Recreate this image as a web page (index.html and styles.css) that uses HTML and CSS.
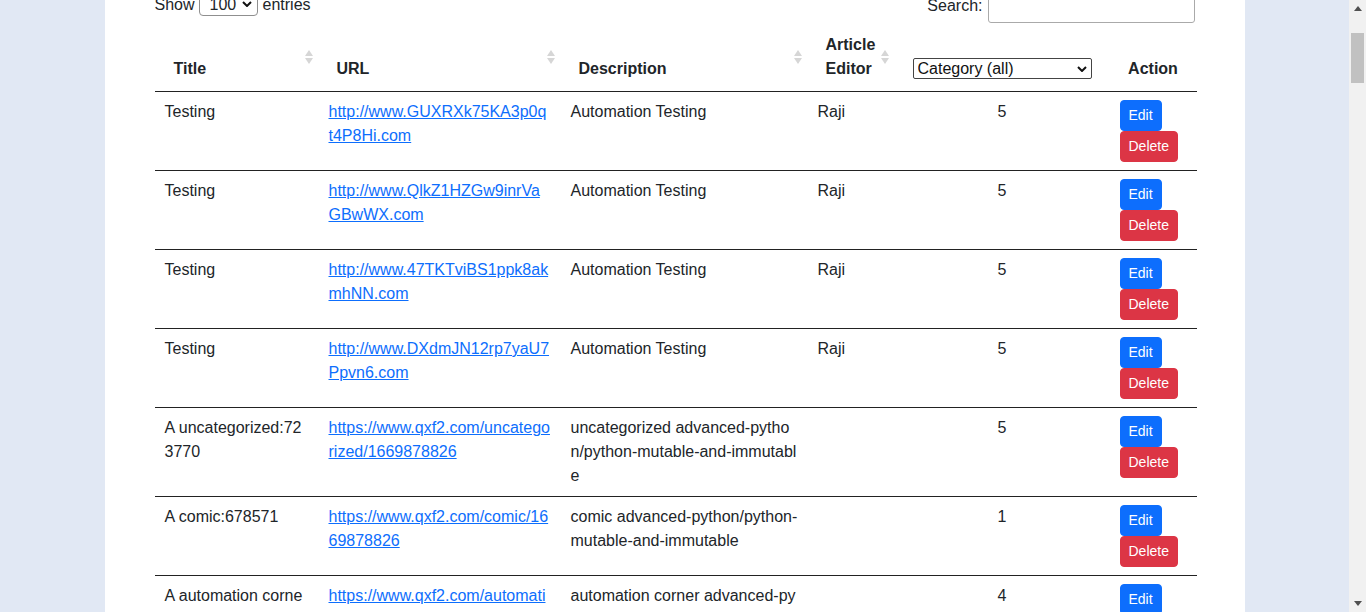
FILE: index.html
```html
<!DOCTYPE html>
<html lang="en">
<head>
<meta charset="utf-8">
<title>Articles</title>
<link rel="stylesheet" href="styles.css">
</head>
<body>
<div class="page">
  <main class="viewport">
    <div class="container">
      <h1 class="page-title">Articles</h1>
      <div class="dt-top">
        <label class="dt-length">Show
          <span class="select-wrap select-wrap-len">
            <select class="length-select"><option>100</option></select>
            <svg class="chev" viewBox="0 0 10 6" width="10" height="6"><path d="M1 1l4 4 4-4" fill="none" stroke="#111" stroke-width="2"/></svg>
          </span>
          entries</label>
        <label class="dt-filter">Search:<input type="search" class="search-input"></label>
      </div>
      <table class="data-table">
        <colgroup>
          <col class="c-title"><col class="c-url"><col class="c-desc"><col class="c-editor"><col class="c-cat"><col class="c-action">
        </colgroup>
        <thead>
          <tr>
            <th class="sorting">Title</th>
            <th class="sorting">URL</th>
            <th class="sorting">Description</th>
            <th class="sorting">Article Editor</th>
            <th class="center">
              <span class="select-wrap select-wrap-cat">
                <select class="cat-select"><option>Category (all)</option></select>
                <svg class="chev" viewBox="0 0 10 6" width="10" height="6"><path d="M1 1l4 4 4-4" fill="none" stroke="#111" stroke-width="2"/></svg>
              </span>
            </th>
            <th class="center">Action</th>
          </tr>
        </thead>
        <tbody>
          <tr>
            <td>Testing</td>
            <td><a href="#">http://www.GUXRXk75KA3p0qt4P8Hi.com</a></td>
            <td>Automation Testing</td>
            <td>Raji</td>
            <td class="center">5</td>
            <td><div class="actions"><button class="btn btn-edit">Edit</button><button class="btn btn-delete">Delete</button></div></td>
          </tr>
          <tr>
            <td>Testing</td>
            <td><a href="#">http://www.QlkZ1HZGw9inrVaGBwWX.com</a></td>
            <td>Automation Testing</td>
            <td>Raji</td>
            <td class="center">5</td>
            <td><div class="actions"><button class="btn btn-edit">Edit</button><button class="btn btn-delete">Delete</button></div></td>
          </tr>
          <tr>
            <td>Testing</td>
            <td><a href="#">http://www.47TKTviBS1ppk8akmhNN.com</a></td>
            <td>Automation Testing</td>
            <td>Raji</td>
            <td class="center">5</td>
            <td><div class="actions"><button class="btn btn-edit">Edit</button><button class="btn btn-delete">Delete</button></div></td>
          </tr>
          <tr>
            <td>Testing</td>
            <td><a href="#">http://www.DXdmJN12rp7yaU7Ppvn6.com</a></td>
            <td>Automation Testing</td>
            <td>Raji</td>
            <td class="center">5</td>
            <td><div class="actions"><button class="btn btn-edit">Edit</button><button class="btn btn-delete">Delete</button></div></td>
          </tr>
          <tr>
            <td>A uncategorized:723770</td>
            <td><a href="#">https://www.qxf2.com/uncategorized/1669878826</a></td>
            <td>uncategorized advanced-python/python-mutable-and-immutable</td>
            <td></td>
            <td class="center">5</td>
            <td><div class="actions"><button class="btn btn-edit">Edit</button><button class="btn btn-delete">Delete</button></div></td>
          </tr>
          <tr>
            <td>A comic:678571</td>
            <td><a href="#">https://www.qxf2.com/comic/1669878826</a></td>
            <td>comic advanced-python/python-mutable-and-immutable</td>
            <td></td>
            <td class="center">1</td>
            <td><div class="actions"><button class="btn btn-edit">Edit</button><button class="btn btn-delete">Delete</button></div></td>
          </tr>
          <tr>
            <td>A automation corner:451209</td>
            <td><a href="#">https://www.qxf2.com/automation-corner/1669878826</a></td>
            <td>automation corner advanced-python/python-mutable-and-immutable</td>
            <td></td>
            <td class="center">4</td>
            <td><div class="actions"><button class="btn btn-edit">Edit</button><button class="btn btn-delete">Delete</button></div></td>
          </tr>
          <tr>
            <td>A interview:902318</td>
            <td><a href="#">https://www.qxf2.com/interview/1669878826</a></td>
            <td>interview advanced-python/python-mutable-and-immutable</td>
            <td></td>
            <td class="center">3</td>
            <td><div class="actions"><button class="btn btn-edit">Edit</button><button class="btn btn-delete">Delete</button></div></td>
          </tr>
        </tbody>
      </table>
    </div>
  </main>
  <div class="scrollbar" aria-hidden="true">
    <div class="sb-btn"><span class="sb-up"></span></div>
    <div class="sb-track"><div class="sb-thumb"></div></div>
    <div class="sb-btn"><span class="sb-down"></span></div>
  </div>
</div>
<script src="script.js"></script>
</body>
</html>
```

FILE: styles.css
```css
* { box-sizing: border-box; }

html, body {
  margin: 0;
  height: 100%;
  overflow: hidden;
}

body {
  font-family: "Liberation Sans", Arial, sans-serif;
  font-size: 16px;
  line-height: 1.5;
  color: #212529;
}

.page {
  display: flex;
  height: 100%;
}

.viewport {
  flex: 1;
  overflow: hidden;
  background: #e1e8f4;
}

.container {
  width: 1140px;
  margin: 0 auto;
  background: #fff;
  padding: 24px 48px 60px 50px;
}

.page-title {
  font-size: 28px;
  font-weight: 500;
  margin: 0 0 24px;
}

.dt-top {
  display: flex;
  justify-content: space-between;
  align-items: flex-start;
  padding-right: 2px;
}

.dt-length, .dt-filter {
  display: flex;
  align-items: baseline;
}

.select-wrap {
  position: relative;
  display: inline-block;
}

.select-wrap .chev {
  position: absolute;
  top: 50%;
  margin-top: -3px;
  pointer-events: none;
}

.select-wrap-len {
  margin: 0 5px 0 4px;
}

.select-wrap-len .chev { right: 6px; }

.length-select {
  appearance: none;
  -webkit-appearance: none;
  width: 59px;
  height: 24px;
  border: 1px solid #8f8f8f;
  border-radius: 4px;
  background: #fff;
  font: 16px "Liberation Sans", Arial, sans-serif;
  color: #212529;
  padding: 0 0 0 10px;
  display: block;
}

.search-input {
  width: 207px;
  height: 31px;
  margin-left: 5px;
  border: 1px solid #aaa;
  border-radius: 3px;
  padding: 3px 5px 7px;
  font: 16px "Liberation Sans", Arial, sans-serif;
  background: #fff;
}

.data-table {
  width: 100%;
  border-collapse: collapse;
  table-layout: fixed;
}

.c-title { width: 164px; }
.c-url { width: 242px; }
.c-desc { width: 247px; }
.c-editor { width: 87px; }
.c-cat { width: 215px; }
.c-action { width: 87px; }

.data-table th {
  position: relative;
  padding: 10px 18px;
  text-align: left;
  vertical-align: bottom;
  font-weight: bold;
  border-bottom: 1px solid #222;
}

.data-table th:first-child {
  padding-left: 19px;
}

.data-table th.center, .data-table td.center {
  text-align: center;
}

.data-table th.sorting::before,
.data-table th.sorting::after {
  content: "";
  position: absolute;
  right: 6px;
  width: 0;
  height: 0;
  border-left: 4px solid transparent;
  border-right: 4px solid transparent;
}

.data-table th.sorting::before {
  bottom: 50%;
  margin-bottom: 1px;
  border-bottom: 6px solid #d6d6d6;
}

.data-table th.sorting::after {
  top: 50%;
  margin-top: 1px;
  border-top: 6px solid #d6d6d6;
}

.select-wrap-cat { display: block; }
.select-wrap-cat .chev { right: 5px; }

.cat-select {
  appearance: none;
  -webkit-appearance: none;
  display: block;
  width: 179px;
  height: 21px;
  margin-bottom: 2px;
  border: 1px solid #444;
  border-radius: 2px;
  background: #fff;
  font: 16px "Liberation Sans", Arial, sans-serif;
  color: #111;
  padding: 0 0 0 4px;
  line-height: 19px;
}

.data-table td {
  padding: 8px 10px;
  vertical-align: top;
  border-bottom: 1px solid #222;
  word-break: break-all;
}

.data-table a {
  color: #0d6efd;
  text-decoration: underline;
}

.actions {
  display: flex;
  flex-direction: column;
  align-items: flex-start;
}

.btn {
  font: 14px/1.5 "Liberation Sans", Arial, sans-serif;
  padding: 4px 8px;
  border: 1px solid transparent;
  border-radius: 4px;
  color: #fff;
  cursor: pointer;
}

.btn-edit {
  background: #0d6efd;
  border-color: #0d6efd;
}

.btn-delete {
  background: #dc3545;
  border-color: #dc3545;
}

.scrollbar {
  width: 17px;
  flex: 0 0 17px;
  background: #f1f1f1;
  display: flex;
  flex-direction: column;
}

.sb-btn {
  height: 17px;
  flex: 0 0 17px;
  display: flex;
  align-items: center;
  justify-content: center;
}

.sb-up, .sb-down {
  width: 0;
  height: 0;
  border-left: 4px solid transparent;
  border-right: 4px solid transparent;
}

.sb-up { border-bottom: 5px solid #505050; }
.sb-down { border-top: 5px solid #505050; }

.sb-track {
  flex: 1;
}

.sb-thumb {
  margin: 16px 2px 0;
  height: 50px;
  background: #c1c1c1;
}
```

FILE: script.js
```js
(function () {
  var vp = document.querySelector('.viewport');
  var table = document.querySelector('.data-table');
  var offset = table.getBoundingClientRect().top - vp.getBoundingClientRect().top - 23;
  vp.scrollTop = offset;
})();
```
